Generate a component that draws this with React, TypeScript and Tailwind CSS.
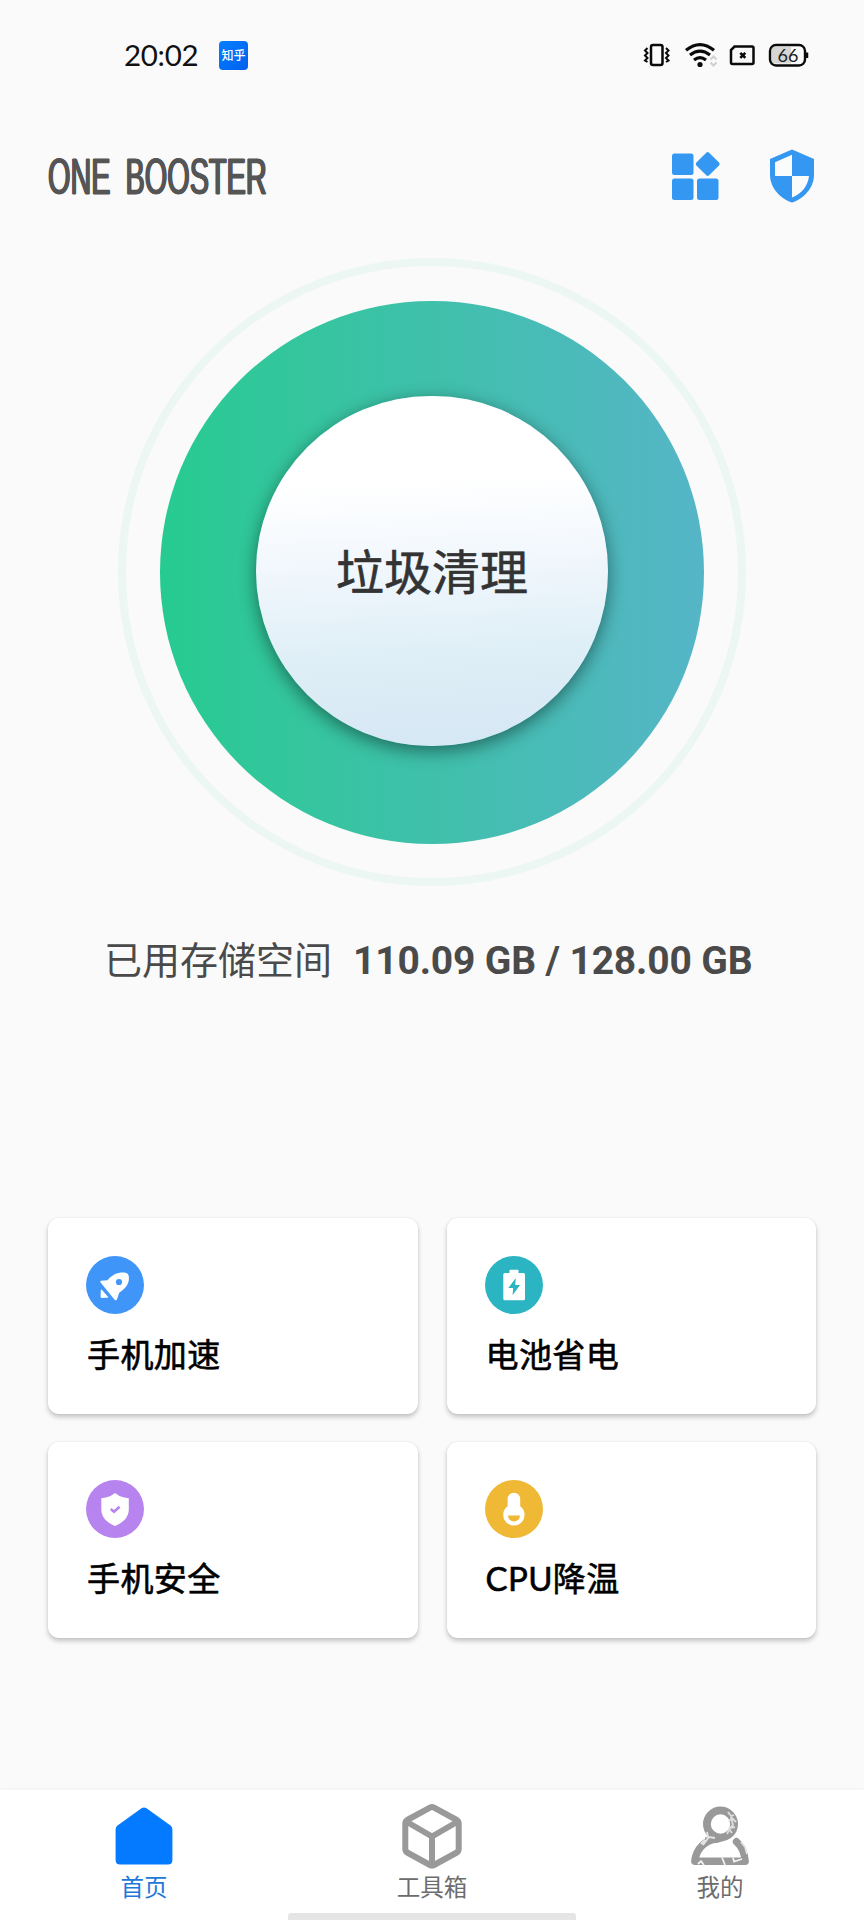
import React from "react";

interface Feature {
  id: string;
  label: string;
  icon: React.ReactNode;
}

interface Tab {
  id: string;
  label: string;
  color: string;
  icon: React.ReactNode;
}

const FEATURES: Feature[] = [
  {
    id: "boost",
    label: "手机加速",
    icon: (
      <svg viewBox="0 0 58 58" className="w-[58px] h-[58px]">
        <circle cx="29" cy="29" r="29" fill="#4096f8" />
        <path d="M14.6 26.4Q13.4 25.2 15 24.7L21.5 24.2C26.5 18.5 31.5 16.2 38.5 16.6Q42.6 17 42.9 21C43.3 28 40 32 33.2 36.8L31 43.2Q30.2 45.4 28.4 43.4Z" fill="#fff" />
        <circle cx="33" cy="26" r="3.1" fill="#4096f8" />
        <path d="M15.6 33.6L22.6 41.5L16.2 42Q14.6 42 14.6 40.4L14.8 34.2Z" fill="#fff" />
      </svg>
    ),
  },
  {
    id: "battery",
    label: "电池省电",
    icon: (
      <svg viewBox="0 0 58 58" className="w-[58px] h-[58px]">
        <circle cx="29" cy="29" r="29" fill="#2bb5c3" />
        <path d="M24.5 17V14.6Q24.5 13.7 25.4 13.7H32.6Q33.5 13.7 33.5 14.6V17H38.5Q40 17 40 18.5V42.8Q40 44.3 38.5 44.3H19.8Q18.3 44.3 18.3 42.8V18.5Q18.3 17 19.8 17Z" fill="#fff" />
        <path d="M30.8 22L23.3 32H28.2L27.6 39.2L35 29H30.2Z" fill="#2bb5c3" />
      </svg>
    ),
  },
  {
    id: "security",
    label: "手机安全",
    icon: (
      <svg viewBox="0 0 58 58" className="w-[58px] h-[58px]">
        <circle cx="29" cy="29" r="29" fill="#b683ef" />
        <path d="M29 13L33.5 16Q38 18 42.8 18.2V29.5C42.8 37.5 36.5 43 29 46C21.5 43 15.3 37.5 15.3 29.5V18.2Q20 18 24.5 16Z" fill="#fff" />
        <path d="M24.8 29L28 31.8L33.6 26.8" fill="none" stroke="#b683ef" strokeWidth="2.5" />
      </svg>
    ),
  },
  {
    id: "cooling",
    label: "CPU降温",
    icon: (
      <svg viewBox="0 0 58 58" className="w-[58px] h-[58px]">
        <circle cx="29" cy="29" r="29" fill="#f0b935" />
        <path d="M22.6 19A6.3 6.3 0 0 1 35.2 19V26.2A10.7 10.7 0 1 1 22.6 26.2Z" fill="#fff" />
        <path d="M23 35.5H35A6 6 0 0 1 23 35.5Z" fill="#f0b935" />
      </svg>
    ),
  },
];

const TABS: Tab[] = [
  {
    id: "home",
    label: "首页",
    color: "text-[#2079d9]",
    icon: (
      <svg viewBox="0 0 60 66" className="w-[60px] h-[66px]">
        <path d="M27.5 5.2Q30 3.6 32.5 5.2L56.5 22.5Q58.4 24 58.4 26.5V57Q58.4 61.5 54 61.5H6Q1.6 61.5 1.6 57V26.5Q1.6 24 3.5 22.5Z" fill="#037aff" />
      </svg>
    ),
  },
  {
    id: "tools",
    label: "工具箱",
    color: "text-[#6c6c6c]",
    icon: (
      <svg viewBox="0 0 60 66" className="w-[60px] h-[66px]" fill="none" stroke="#999" strokeWidth="6" strokeLinejoin="round">
        <path d="M28 4.6Q30 3.5 32 4.6L54.8 17Q56.7 18.2 56.7 20.5V46Q56.7 48.3 54.8 49.5L32 62Q30 63.1 28 62L5.2 49.5Q3.3 48.3 3.3 46V20.5Q3.3 18.2 5.2 17Z" />
        <path d="M5 19L30 33.5L55 19M30 33.5V62" />
      </svg>
    ),
  },
  {
    id: "mine",
    label: "我的",
    color: "text-[#6c6c6c]",
    icon: (
      <svg viewBox="0 0 60 66" className="w-[60px] h-[66px]" fill="none">
        <circle cx="30.5" cy="21" r="13.6" stroke="#999" strokeWidth="7.8" />
        <path d="M27 36C15 37 6 46 4.8 58.2H55.2C54.5 49 52 43.5 46.5 38.7" stroke="#999" strokeWidth="7.4" strokeLinecap="round" strokeLinejoin="round" />
        <path d="M15 34L24 36L38 35Q33 39 27 39.5L16 39Z" fill="#999" />
        <path d="M38 9L41 13L44 12M39 18L42 15L46 19M41 14L43 22L39 26L42 30M45 24L40 25L37 31" stroke="#dedede" strokeWidth="1.8" />
        <path d="M11 41L15 37L13 42L19 34L25 35M17 29L18 34M51 39L55 44L57 51" stroke="#e4e4e4" strokeWidth="1.8" />
        <path d="M8 61L11 58L14 62M32 54.5L35 62M43 54.5L44 58.5L52 56" stroke="#f1f1f1" strokeWidth="1.8" />
      </svg>
    ),
  },
];

function StatusBar() {
  return (
    <div className="h-[110px] pt-[40px] pl-[124px] pr-[55px] flex justify-between">
      <div className="flex items-start">
        <span className="font-['Lato'] text-[29.5px] leading-[29px] text-[#111] w-[95px] tracking-[-0.3px]">20:02</span>
        <span className="w-[29px] h-[29px] mt-px rounded-[4px] bg-linear-to-br from-[#087fff] to-[#0060ee] text-white text-[12px] leading-[28px] font-medium text-center whitespace-nowrap">
          知乎
        </span>
      </div>
      <svg viewBox="0 0 167 30" className="w-[167px] h-[30px]" fill="none" stroke="#0a0a0a">
        {/* vibrate */}
        <rect x="9" y="5" width="11.5" height="20" rx="2" strokeWidth="2.5" />
        <path d="M5.5 8L3 10.5L5.5 13L3 15.5L5.5 18L3 20.5L5.5 22M24 8L26.5 10.5L24 13L26.5 15.5L24 18L26.5 20.5L24 22" strokeWidth="2" />
        {/* wifi */}
        <path d="M44 10.3Q58 -1 72 10.3" strokeWidth="3.2" />
        <path d="M48 15Q58 7.3 68 15" strokeWidth="3.2" />
        <path d="M52 20Q58 15.2 64 20" strokeWidth="3.2" />
        <circle cx="58" cy="24.5" r="2.6" fill="#0a0a0a" stroke="none" />
        <path d="M68.5 19.5L71.5 16.5L74.5 19.5M68.5 22.5L71.5 25.5L74.5 22.5" stroke="#cfcfcf" strokeWidth="2" />
        {/* sim */}
        <path d="M92.5 6.5H110Q111.5 6.5 111.5 8V22.5Q111.5 24 110 24H90.5Q89 24 89 22.5V10Z" strokeWidth="2.5" />
        <path d="M98.3 12.8L103.3 17.8M103.3 12.8L98.3 17.8" strokeWidth="2.6" />
        {/* battery */}
        <path d="M132 7H149V23.500H132Q129.5 23 129.5 20V10Q129.5 7 132 7Z" fill="#d5d5d5" stroke="none" />
        <rect x="128" y="5" width="35" height="20.5" rx="6" strokeWidth="2.4" />
        <path d="M165 12.5V18" strokeWidth="2.5" />
        <text x="146" y="21.5" textAnchor="middle" fontSize="18" fontFamily="Lato" fill="#222" stroke="none">66</text>
      </svg>
    </div>
  );
}

function Header() {
  return (
    <header className="h-[94px] pl-[48px] pr-[49px] pt-[38px] flex justify-between">
      <h1 className="font-['Liberation_Sans'] text-[49.5px] leading-[58px] text-[#555] whitespace-nowrap origin-left scale-x-[0.583] [word-spacing:12px] [-webkit-text-stroke:1px_#555] [text-shadow:1.4px_0_#555,-1.4px_0_#555] w-[220px]">
        ONE BOOSTER
      </h1>
      <div className="flex gap-[48px]">
        <svg viewBox="0 0 52 56" className="w-[52px] h-[56px]" fill="#3497f2">
          <rect x="3" y="5.5" width="21.5" height="21.5" rx="2.5" />
          <rect x="3" y="30.5" width="21.5" height="21.5" rx="2.5" />
          <rect x="28" y="30.5" width="21.5" height="21.5" rx="2.5" />
          <rect x="29.7" y="7" width="18" height="18" rx="2" transform="rotate(45 38.7 16)" />
        </svg>
        <svg viewBox="0 0 46 56" className="w-[46px] h-[56px]">
          <path d="M23 1.5L45 11V27C45 39 35.5 50.5 23 54.5C10.5 50.5 1 39 1 27V11Z" fill="#3497f2" />
          <path d="M23 6.8V28H6V14.2ZM23 28H40C39 38 32.5 46 23 49.5Z" fill="#fafbfb" />
        </svg>
      </div>
    </header>
  );
}

function CleanButton() {
  return (
    <div className="mt-[54px] mx-auto w-[628px] h-[628px] rounded-full border-[8px] border-[#ecf7f3] flex items-center justify-center">
      <div className="w-[544px] h-[543px] rounded-full bg-linear-to-r from-[#26cb90] via-[#3fc0ab] to-[#55b5c7] flex items-center justify-center">
        <button className="w-[352px] h-[350px] mb-[3px] pb-[3px] rounded-full bg-[linear-gradient(177deg,#fff_25%,#f3f8fd_45%,#ddeef6_75%,#d6e7f5_100%)] shadow-[0_5px_18px_rgba(0,0,0,0.45)] text-[48px] leading-[48px] text-[#333] [-webkit-text-stroke:0.6px_#333]">
          垃圾清理
        </button>
      </div>
    </div>
  );
}

export default function App() {
  return (
    <div className="w-[864px] h-[1920px] bg-[#fafafa] flex flex-col overflow-hidden font-['Noto_Sans_CJK_SC',sans-serif]">
      <StatusBar />
      <Header />
      <CleanButton />

      {/* Storage usage */}
      <div className="mt-[46px] h-[56px] pl-[104px] flex items-center text-[#4a4a4a] whitespace-nowrap">
        <span className="text-[38px] leading-[56px] pb-[4px] w-[249px]">已用存储空间</span>
        <span className="font-['Roboto'] text-[39px] leading-[56px] pt-px font-bold tracking-[-0.15px]">110.09 GB / 128.00 GB</span>
      </div>

      {/* Feature cards */}
      <div className="mt-[230px] px-[48px] grid grid-cols-2 gap-x-[29px] gap-y-[28px]">
        {FEATURES.map(feature => (
          <div key={feature.id} className="h-[196px] pl-[38px] pt-[38px] rounded-[11px] bg-white shadow-[0_3px_5px_rgba(0,0,0,0.22),0_0_2px_rgba(0,0,0,0.08)]">
            {feature.icon}
            <div className="mt-[20px] pl-px text-[33px] leading-[40px] tracking-[0.4px] text-black [-webkit-text-stroke:0.6px_#000] font-['Lato','Noto_Sans_CJK_SC',sans-serif]">
              {feature.label}
            </div>
          </div>
        ))}
      </div>

      {/* Bottom tabs */}
      <nav className="mt-auto h-[130px] bg-white flex flex-col shadow-[0_-1px_3px_rgba(0,0,0,0.04)]">
        <div className="grid grid-cols-3 h-[123px]">
          {TABS.map(tab => (
            <div key={tab.id} className="pt-[13px] flex flex-col items-center">
              {tab.icon}
              <span className={`mt-[2px] text-[23.5px] leading-[30px] ${tab.color}`}>{tab.label}</span>
            </div>
          ))}
        </div>
        <div className="w-[288px] h-[7px] mx-auto rounded-t-[3px] bg-[#e5e5e5]" />
      </nav>
    </div>
  );
}
